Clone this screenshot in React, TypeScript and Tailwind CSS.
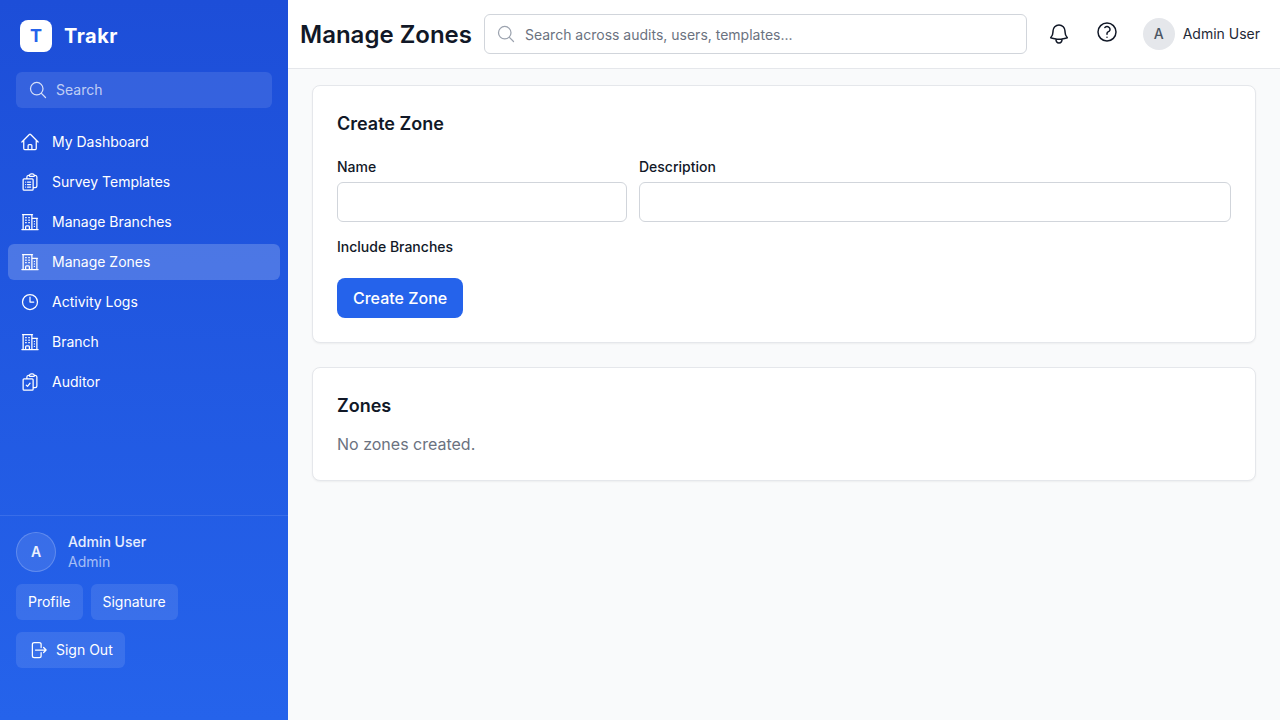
import type { ComponentType } from "react";
import {
  HiOutlineArrowRightOnRectangle,
  HiOutlineBell,
  HiOutlineBuildingOffice2,
  HiOutlineClipboardDocumentCheck,
  HiOutlineClipboardDocumentList,
  HiOutlineClock,
  HiOutlineHome,
  HiOutlineMagnifyingGlass,
  HiOutlineQuestionMarkCircle,
} from "react-icons/hi2";

type NavItem = {
  label: string;
  icon: ComponentType<{ className?: string }>;
  active?: boolean;
};

const navItems: NavItem[] = [
  { label: "My Dashboard", icon: HiOutlineHome },
  { label: "Survey Templates", icon: HiOutlineClipboardDocumentList },
  { label: "Manage Branches", icon: HiOutlineBuildingOffice2 },
  { label: "Manage Zones", icon: HiOutlineBuildingOffice2, active: true },
  { label: "Activity Logs", icon: HiOutlineClock },
  { label: "Branch", icon: HiOutlineBuildingOffice2 },
  { label: "Auditor", icon: HiOutlineClipboardDocumentCheck },
];

function Sidebar() {
  return (
    <aside className="flex w-72 shrink-0 flex-col bg-linear-to-b/srgb from-[#1d4ed8] to-[#2563eb] text-white">
      <div className="flex items-center gap-3 px-5 pt-5">
        <div className="flex size-8 items-center justify-center rounded-lg bg-white text-lg leading-7 font-bold text-[#2563eb]">
          T
        </div>
        <span className="text-xl font-bold tracking-wide">Trakr</span>
      </div>

      <div className="px-4 pt-5 pb-4">
        <label className="flex h-9 items-center gap-2 rounded-md bg-white/10 px-3">
          <HiOutlineMagnifyingGlass className="size-5 shrink-0 text-white/80" />
          <input
            type="text"
            placeholder="Search"
            className="w-full bg-transparent text-sm outline-none placeholder:text-white/70"
          />
        </label>
      </div>

      <nav className="flex flex-1 flex-col gap-1 px-2">
        {navItems.map(({ label, icon: Icon, active }) => (
          <a
            key={label}
            href="#"
            className={
              active
                ? "flex h-9 items-center gap-3 rounded-md bg-white/20 px-3 text-sm text-white"
                : "flex h-9 items-center gap-3 rounded-md px-3 text-sm text-white"
            }
          >
            <Icon className="size-5 shrink-0" />
            {label}
          </a>
        ))}
      </nav>

      <div className="border-t border-white/10 px-4 pt-4 pb-13">
        <div className="flex items-center gap-3">
          <div className="flex size-10 items-center justify-center rounded-full border border-white/20 bg-white/10 text-sm font-semibold text-white/90">
            A
          </div>
          <div className="text-sm">
            <div className="font-medium text-white/90">Admin User</div>
            <div className="text-white/60">Admin</div>
          </div>
        </div>
        <div className="mt-3 flex gap-2">
          <button className="h-9 rounded-md bg-white/10 px-3 text-sm">Profile</button>
          <button className="h-9 rounded-md bg-white/10 px-3 text-sm">Signature</button>
        </div>
        <button className="mt-3 flex h-9 items-center gap-2 rounded-md bg-white/10 px-3 text-sm">
          <HiOutlineArrowRightOnRectangle className="size-5" />
          Sign Out
        </button>
      </div>
    </aside>
  );
}

function Header() {
  return (
    <header className="flex h-[69px] shrink-0 items-center border-b border-[#e5e7eb] bg-white pr-5 pl-3">
      <h1 className="pt-px text-2xl font-semibold whitespace-nowrap text-[#111827]">Manage Zones</h1>
      <label className="mx-3 flex h-10 flex-1 items-center gap-[9px] rounded-md border border-[#d1d5db] px-3 pl-[11px]">
        <HiOutlineMagnifyingGlass className="size-5 shrink-0 text-[#9ca3af]" />
        <input
          type="text"
          placeholder="Search across audits, users, templates..."
          className="w-full bg-transparent pt-0.5 text-sm outline-none placeholder:text-[#6b7280]"
        />
      </label>
      <div className="flex gap-2 text-[#111827]">
        <button aria-label="Notifications" className="flex size-10 items-center justify-center">
          <HiOutlineBell className="size-6" />
        </button>
        <button aria-label="Help" className="flex size-10 items-center justify-center pb-1">
          <HiOutlineQuestionMarkCircle className="size-6" />
        </button>
      </div>
      <div className="ml-4 flex items-center gap-2">
        <div className="flex size-8 items-center justify-center rounded-full bg-[#e5e7eb] text-sm font-medium text-[#4b5563]">
          A
        </div>
        <span className="text-sm whitespace-nowrap text-[#1f2937]">Admin User</span>
      </div>
    </header>
  );
}

function CreateZoneCard() {
  return (
    <section className="rounded-lg border border-[#e5e7eb] bg-white p-6 shadow-[0_1px_2px_0_rgb(0_0_0/0.05)]">
      <h2 className="mb-4 text-lg font-semibold">Create Zone</h2>
      <div className="grid grid-cols-3 gap-3">
        <div>
          <label htmlFor="name" className="text-sm font-medium">
            Name
          </label>
          <input id="name" className="mt-1 block h-10 w-full rounded-md border border-[#d1d5db] px-3" />
        </div>
        <div className="col-span-2">
          <label htmlFor="description" className="text-sm font-medium">
            Description
          </label>
          <input id="description" className="mt-1 block h-10 w-full rounded-md border border-[#d1d5db] px-3" />
        </div>
      </div>
      <div className="mt-3">
        <label className="text-sm font-medium">Include Branches</label>
      </div>
      <button className="mt-5 block h-10 rounded-lg bg-[#2563eb] px-4 font-medium text-white">
        Create Zone
      </button>
    </section>
  );
}

export default function App() {
  return (
    <div className="flex h-screen overflow-hidden bg-[#f9fafb] font-['Inter',sans-serif] text-[#111827]">
      <Sidebar />
      <div className="flex min-w-0 flex-1 flex-col">
        <Header />
        <main className="flex flex-col gap-6 px-6 pt-4">
          <CreateZoneCard />
          <section className="rounded-lg border border-[#e5e7eb] bg-white p-6 shadow-[0_1px_2px_0_rgb(0_0_0/0.05)]">
            <h2 className="mb-3 text-lg font-semibold">Zones</h2>
            <p className="text-[#6b7280]">No zones created.</p>
          </section>
        </main>
      </div>
    </div>
  );
}
